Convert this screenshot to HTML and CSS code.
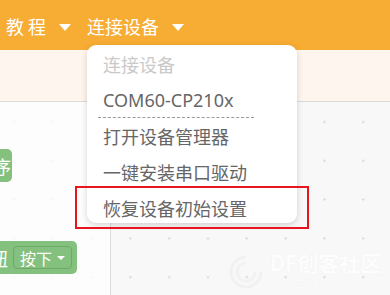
FILE: index.html
```html
<!DOCTYPE html>
<html lang="zh-CN">
<head>
<meta charset="utf-8">
<link rel="stylesheet" href="styles.css">
</head>
<body>
<div class="app">
  <header class="topbar">
    <div class="nav-item"><span class="nav-label">教 程</span><span class="caret"></span></div>
    <div class="nav-item"><span class="nav-label">连接设备</span><span class="caret"></span></div>
  </header>
  <div class="subbar"></div>
  <div class="workspace">
    <div class="palette">
      <div class="block block-a"><span class="block-text">序</span></div>
      <div class="block block-b"><span class="block-text">钮</span><span class="block-field">按下<span class="field-caret"></span></span></div>
    </div>
    <div class="canvas"></div>
  </div>

  <div class="watermark">
    <svg class="wm-logo" width="42" height="34" viewBox="0 0 42 34">
      <path d="M21 3 A15 15 0 1 0 36 18" fill="none" stroke="#f1f1f1" stroke-width="3"/>
      <path d="M21 9 A9 9 0 1 0 30 18" fill="none" stroke="#f2f2f2" stroke-width="3"/>
    </svg>
    <div class="wm-text">
      <div class="wm-title">DF创客社区</div>
      <div class="wm-url">www.DFRobot.com.cn</div>
    </div>
  </div>

  <ul class="menu">
    <li class="menu-item disabled">连接设备</li>
    <li class="menu-item port">COM60-CP210x</li>
    <li class="menu-item">打开设备管理器</li>
    <li class="menu-item">一键安装串口驱动</li>
    <li class="menu-item">恢复设备初始设置</li>
  </ul>
  <div class="highlight"></div>
</div>
</body>
</html>
```

FILE: styles.css
```css
* { box-sizing: border-box; }
html, body { margin: 0; padding: 0; }
body {
  width: 390px;
  height: 295px;
  overflow: hidden;
  font-family: "Noto Sans", "Noto Sans CJK SC", sans-serif;
}
.app {
  position: relative;
  width: 390px;
  height: 295px;
  display: flex;
  flex-direction: column;
  overflow: hidden;
}
.topbar {
  height: 50px;
  background: #f7ac33;
  display: flex;
  align-items: flex-start;
  padding: 15px 0 0 6px;
  gap: 16px;
}
.nav-item {
  display: flex;
  align-items: center;
  gap: 13px;
  color: #fff;
  font-size: 18px;
  line-height: 22px;
  font-family: "Noto Sans CJK SC", sans-serif;
}
.caret {
  width: 0;
  height: 0;
  border-left: 6px solid transparent;
  border-right: 6px solid transparent;
  border-top: 7px solid #fff;
  margin-top: 2px;
}
.subbar {
  height: 52px;
  background: #fef6ee;
  border-bottom: 1px solid #dedad6;
}
.workspace {
  flex: 1;
  display: flex;
  background-image: radial-gradient(circle, #d6d6d6 0.9px, transparent 1.3px);
  background-size: 38.8px 38.8px;
  background-position: -5.4px 0.6px;
  background-color: #f8f8f8;
}
.palette {
  width: 111px;
  background-color: rgba(255,255,255,0.75);
  border-right: 1px solid #dcdcdc;
  position: relative;
}
.canvas { flex: 1; }
.block {
  position: absolute;
  left: 0;
  background: #85c17e;
  border-radius: 0 5px 5px 0;
  color: #fff;
  font-family: "Noto Sans CJK SC", sans-serif;
  font-size: 18px;
  display: flex;
  align-items: center;
}
.block-a {
  top: 47px;
  width: 12px;
  height: 33px;
  overflow: hidden;
}
.block-a .block-text { margin-left: -7px; }
.block-b {
  top: 139px;
  width: 77px;
  height: 33px;
  overflow: hidden;
}
.block-b .block-text { margin-left: -10px; width: 19px; flex-shrink: 0; }
.block-field {
  margin-left: 4px;
  height: 23px;
  width: 59px;
  flex-shrink: 0;
  border: 1px solid #6ea967;
  border-radius: 4px;
  display: flex;
  align-items: center;
  padding-left: 6px;
  font-size: 16px;
  gap: 4px;
}
.field-caret {
  width: 0;
  height: 0;
  border-left: 4px solid transparent;
  border-right: 4px solid transparent;
  border-top: 4px solid #fff;
  margin-left: 1px;
}
.watermark {
  position: absolute;
  left: 225px;
  top: 252px;
  display: flex;
  align-items: flex-start;
  gap: 3px;
  font-family: "Noto Sans CJK SC", sans-serif;
  line-height: 1;
}
.wm-logo { margin-top: 2px; }
.wm-text {
  color: #fdfdfd;
  text-shadow: 0 0 1px rgba(0,0,0,0.05);
}
.wm-title { font-size: 21px; font-weight: bold; white-space: nowrap; }
.wm-url { font-size: 11px; margin-top: 5px; white-space: nowrap; }
.menu {
  position: absolute;
  left: 87px;
  top: 45px;
  width: 210px;
  height: 178px;
  margin: 0;
  padding: 1px 0 0;
  list-style: none;
  background: #fff;
  border-radius: 9px;
  box-shadow: 0 2px 6px rgba(0,0,0,0.16);
  overflow: hidden;
}
.menu-item {
  height: 36px;
  display: flex;
  align-items: center;
  padding-left: 16px;
  font-size: 18px;
  color: #666;
  font-family: "Noto Sans", "Noto Sans CJK SC", sans-serif;
}
.menu-item.disabled { color: #c9c9c9; font-family: "Noto Sans CJK SC", sans-serif; }
.menu-item.port { position: relative; }
.menu-item.port::after {
  content: "";
  position: absolute;
  left: 11px;
  width: 156px;
  bottom: 0;
  border-bottom: 1px dashed #999;
}
.highlight {
  position: absolute;
  left: 75px;
  top: 186px;
  width: 234px;
  height: 43px;
  border: 2px solid #e8141e;
}
```
